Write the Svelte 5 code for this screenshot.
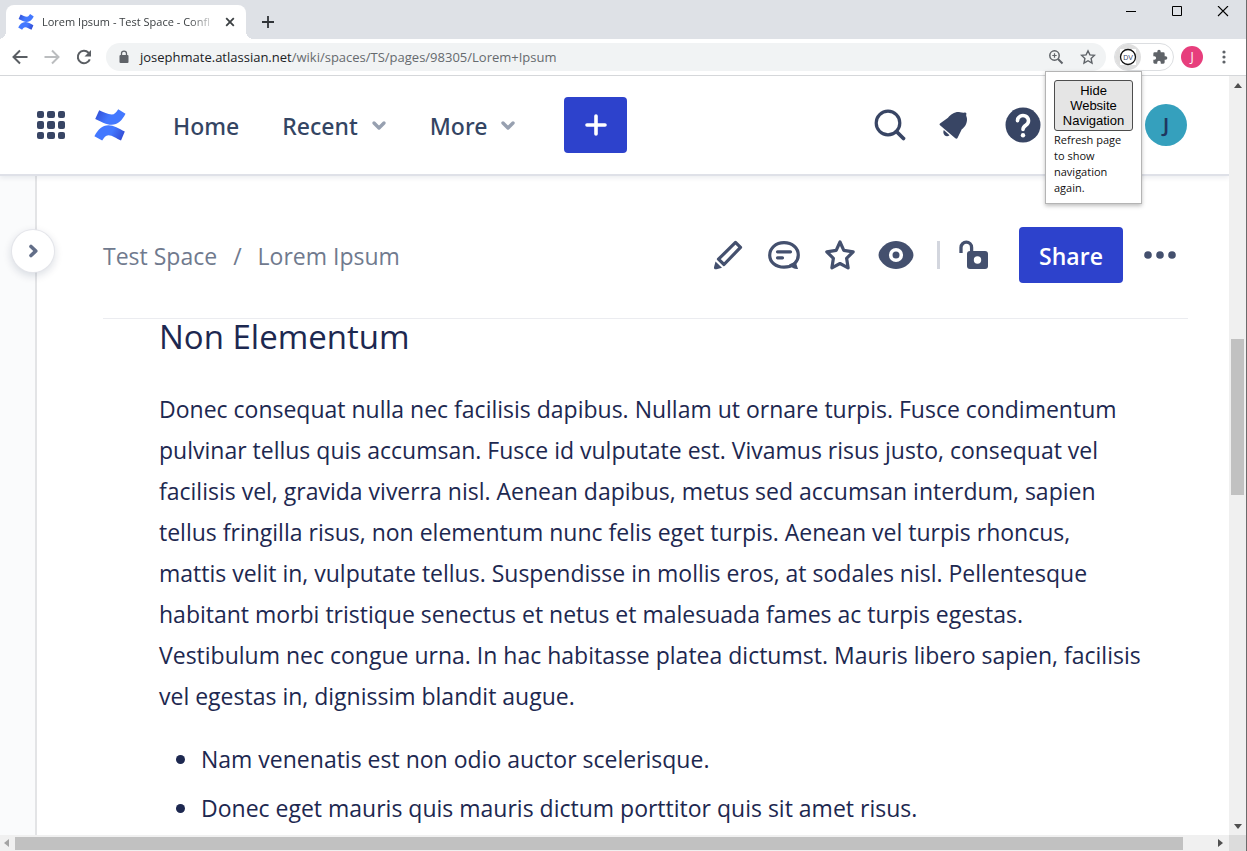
<script>
  const paragraph = [
    'Donec consequat nulla nec facilisis dapibus. Nullam ut ornare turpis. Fusce condimentum',
    'pulvinar tellus quis accumsan. Fusce id vulputate est. Vivamus risus justo, consequat vel',
    'facilisis vel, gravida viverra nisl. Aenean dapibus, metus sed accumsan interdum, sapien',
    'tellus fringilla risus, non elementum nunc felis eget turpis. Aenean vel turpis rhoncus,',
    'mattis velit in, vulputate tellus. Suspendisse in mollis eros, at sodales nisl. Pellentesque',
    'habitant morbi tristique senectus et netus et malesuada fames ac turpis egestas.',
    'Vestibulum nec congue urna. In hac habitasse platea dictumst. Mauris libero sapien, facilisis',
    'vel egestas in, dignissim blandit augue.'
  ];
  const bullets = [
    'Nam venenatis est non odio auctor scelerisque.',
    'Donec eget mauris quis mauris dictum porttitor quis sit amet risus.'
  ];
  const gridDots = [0, 1, 2, 3, 4, 5, 6, 7, 8];
</script>

{#snippet logo(size, id)}
  <svg width={size} height={size} viewBox="0 0 32 32" aria-hidden="true">
    <defs>
      <linearGradient id="{id}a" x1="0" y1="0" x2="1" y2="0.3">
        <stop offset="0" stop-color="#2f48cf" /><stop offset="0.55" stop-color="#4378ff" />
      </linearGradient>
      <linearGradient id="{id}b" x1="1" y1="1" x2="0" y2="0.7">
        <stop offset="0" stop-color="#2f40c8" /><stop offset="0.55" stop-color="#4378ff" />
      </linearGradient>
    </defs>
    <path fill="url(#{id}a)" d="M5.200 1.200c4.500 1.700 8.500 4.300 12.500 4.300 3 0 4.300-2.200 6.500-5.300L31.500 4.800C28 11.500 24 15.800 17.500 15.800 12.500 15.800 7 12.800 1.200 10z" />
    <path fill="url(#{id}b)" d="M27 31.500c-4.500-1.700-8.500-5.200-12.500-5.200-3 0-4.300 2.200-6.300 5.300L.4 27.200C4 20.500 8 16.200 14.500 16.200c5 0 10.500 3.500 16.300 6.200z" />
  </svg>
{/snippet}

{#snippet chevron()}
  <svg class="chevron" width="16" height="12" viewBox="0 0 16 12" aria-hidden="true"><path d="M3 3l5 5 5-5" fill="none" stroke="#97a0b0" stroke-width="3.400" stroke-linecap="round" stroke-linejoin="round" /></svg>
{/snippet}

<div class="window">
  <header class="tabs">
    <div class="tab">
      {@render logo(16, 'tab')}
      <span class="tab-title">Lorem Ipsum - Test Space - Confl</span>
      <button aria-label="Close tab"><svg width="10" height="10" viewBox="0 0 10 10"><path d="M1.200 1.200l7.600 7.600M8.800 1.200L1.200 8.800" stroke="#3c4043" stroke-width="1.800" /></svg></button>
    </div>
    <button class="new-tab" aria-label="New tab"><svg width="12" height="12" viewBox="0 0 12 12"><path d="M6 0v12M0 6h12" stroke="#303438" stroke-width="1.800" /></svg></button>
    <div class="controls">
      <button aria-label="Minimize"><svg width="12" height="12" viewBox="0 0 12 12"><path d="M1 5.500h10" stroke="#000" /></svg></button>
      <button aria-label="Maximize"><svg width="12" height="12" viewBox="0 0 12 12"><path d="M1.500 .5h9v9h-9z" fill="none" stroke="#000" /></svg></button>
      <button aria-label="Close"><svg width="12" height="12" viewBox="0 0 12 12"><path d="M1 0l10 10M11 0L1 10" stroke="#000" stroke-width="1.100" /></svg></button>
    </div>
  </header>

  <div class="toolbar">
    <button class="tool" aria-label="Back"><svg width="24" height="24" viewBox="0 0 24 24"><path d="M19.500 12H6M12 5.500L5.500 12l6.500 6.500" fill="none" stroke="#5a5e63" stroke-width="2" /></svg></button>
    <button class="tool" aria-label="Forward"><svg width="24" height="24" viewBox="0 0 24 24"><path d="M4.500 12H18M12 5.500l6.500 6.500-6.500 6.500" fill="none" stroke="#bbbdbf" stroke-width="2" /></svg></button>
    <button class="tool" aria-label="Reload"><svg width="24" height="24" viewBox="0 0 24 24"><path d="M17.800 14.300a6.200 6.200 0 1 1-1.300-6.600l1.800 1.800" fill="none" stroke="#5a5e63" stroke-width="2" /><path d="M19 5v6.500h-6.500z" fill="#5a5e63" /></svg></button>
    <div class="omnibox">
      <svg width="12" height="14" viewBox="0 0 12 14" aria-hidden="true"><rect x="1.500" y="5" width="9" height="8" rx="1" fill="#5f6368" /><path d="M3.500 6V3.600a2.500 2.500 0 0 1 5 0V6" fill="none" stroke="#5f6368" stroke-width="1.300" /></svg>
      <span class="url"><b>josephmate.atlassian.net</b>/wiki/spaces/TS/pages/98305/Lorem+Ipsum</span>
      <button class="tool" aria-label="Zoom"><svg width="16" height="16" viewBox="0 0 16 16"><circle cx="6.500" cy="6.500" r="4.700" fill="none" stroke="#5f6368" stroke-width="1.500" /><path d="M10 10l4.500 4.500" stroke="#5f6368" stroke-width="1.900" /><path d="M6.500 4.300v4.400M4.300 6.500h4.400" stroke="#5f6368" stroke-width="1.200" /></svg></button>
      <button class="tool" aria-label="Bookmark"><svg width="16" height="16" viewBox="0 0 16 16"><path d="M8 1.800l1.900 4.100 4.500.5-3.300 3.100.9 4.500L8 11.700 4 14l.9-4.500L1.600 6.400l4.500-.5z" fill="none" stroke="#5f6368" stroke-width="1.400" /></svg></button>
    </div>
    <div class="extensions">
      <button class="dv" aria-label="Toggle navigation extension"><svg width="18" height="18" viewBox="0 0 18 18"><rect x="1" y="1" width="16" height="16" fill="#fff" /><circle cx="9" cy="9" r="7.500" fill="#fff" stroke="#111" stroke-width="1.300" /><text x="9" y="11.500" text-anchor="middle" font-size="7" font-family="Liberation Sans, sans-serif" fill="#35456b">DV</text></svg></button>
      <button class="tool" aria-label="Extensions"><svg width="16" height="16" viewBox="0 0 24 24"><path fill="#5f6368" d="M20.500 11H19V7a2 2 0 0 0-2-2h-4V3.500a2.500 2.500 0 0 0-5 0V5H4a2 2 0 0 0-2 2v3.800h1.500a2.700 2.700 0 0 1 0 5.400H2V20c0 1.100.9 2 2 2h3.800v-1.500a2.700 2.700 0 0 1 5.400 0V22H17a2 2 0 0 0 2-2v-4h1.500a2.500 2.500 0 0 0 0-5z" /></svg></button>
      <div class="popup">
        <button>Hide Website Navigation</button>
        <p>Refresh page to show navigation again.</p>
      </div>
    </div>
    <button class="profile">J</button>
    <button class="tool more" aria-label="Menu"><svg width="4" height="14" viewBox="0 0 4 14" fill="#5f6368"><circle cx="2" cy="2" r="1.600" /><circle cx="2" cy="7" r="1.600" /><circle cx="2" cy="12" r="1.600" /></svg></button>
  </div>

  <div class="view">
    <div class="page">
      <nav class="site-nav">
        <button class="apps" aria-label="Switch to">
          {#each gridDots as d (d)}<i></i>{/each}
        </button>
        <a href="#home" class="brand" aria-label="Confluence">{@render logo(32, 'nav')}</a>
        <div class="links">
          <a href="#home">Home</a>
          <button>Recent {@render chevron()}</button>
          <button>More {@render chevron()}</button>
        </div>
        <button class="create" aria-label="Create"><svg width="22" height="22" viewBox="0 0 22 22"><path d="M11 2v18M2 11h18" stroke="#fff" stroke-width="3.600" stroke-linecap="round" /></svg></button>
        <div class="nav-icons">
          <button aria-label="Search"><svg width="34" height="34" viewBox="0 0 34 34"><circle cx="15" cy="15" r="11.800" fill="none" stroke="#384564" stroke-width="3.200" /><path d="M23.500 23.500l7 7" stroke="#384564" stroke-width="3.800" stroke-linecap="round" /></svg></button>
          <button aria-label="Notifications"><svg width="34" height="34" viewBox="2 0 34 34" fill="#384564"><path d="M3 15.500l8-5.800C14 6.500 18 3.400 23 4.200c1.800.3 3.200.9 4.600.3 1.200-.5 2.300.8 1.700 1.800-.5 1.200.5 2.600.7 4.400.2 4.500-2 8.300-5.200 10.600L20.500 30c-.4 1-1.400 1-2.200.3L3 17.200c-.6-.5-.6-1.200 0-1.700z" /><path d="M6.800 22l5.700 5.300c-1.600 1.300-3.600 1.200-4.900-.1-1.300-1.300-1.700-3.400-.8-5.200z" /></svg></button>
          <button aria-label="Help"><svg width="36" height="36" viewBox="0 0 36 36"><circle cx="18" cy="18" r="17.500" fill="#384564" /><path d="M12.500 13.800a5.500 5.200 0 1 1 8.500 4.300c-1.900 1.200-3 1.900-3 4.400" fill="none" stroke="#fff" stroke-width="3.600" stroke-linecap="round" /><circle cx="18" cy="28.300" r="2.200" fill="#fff" /></svg></button>
        </div>
        <button class="avatar">J</button>
      </nav>

      <div class="body">
        <aside>
          <button aria-label="Expand sidebar"><svg width="14" height="18" viewBox="0 0 14 18"><path d="M5 4.500L9.800 9 5 13.500" fill="none" stroke="#626e88" stroke-width="3.600" stroke-linecap="round" stroke-linejoin="round" /></svg></button>
        </aside>
        <main>
          <div class="page-head">
            <div class="crumbs"><a href="#space">Test Space</a><span>/</span><a href="#page">Lorem Ipsum</a></div>
            <div class="actions">
              <button aria-label="Edit"><svg width="36" height="36" viewBox="0 0 36 36"><path d="M25.500 5.400l5 5L14 27.500l-5.500-5.300z" fill="none" stroke="#44506e" stroke-width="3.200" stroke-linejoin="round" /><path d="M5.500 24.500l6.500 6.200-5.500 1.600c-1.600.3-2.800-.4-2.500-2z" fill="#44506e" /></svg></button>
              <button aria-label="Comments"><svg width="36" height="36" viewBox="0 0 36 36"><path d="M28 27.500c-2.500 1.700-6 2.700-10 2.700-8.300 0-14.300-5.200-14.300-12S9.700 5.700 18 5.700s14.300 5.300 14.300 12.400c0 3.200-1.200 5.800-3.300 8z" fill="none" stroke="#44506e" stroke-width="3.200" /><path d="M23 27.500l6.500-3 2.500 7.500c-3.500.3-6-1-9-4.500z" fill="#44506e" /><path d="M11.500 14.800h13M11.500 20.800h5" stroke="#44506e" stroke-width="3.200" stroke-linecap="round" /></svg></button>
              <button aria-label="Star"><svg width="36" height="36" viewBox="0 0 36 36"><path d="M18 5l3.800 8.300 9.400 1.500-6.600 6.500 1.500 9.500L18 26.500l-8.100 4.300 1.500-9.500-6.600-6.500 9.400-1.500z" fill="none" stroke="#44506e" stroke-width="3.200" stroke-linejoin="round" /></svg></button>
              <button aria-label="Watch"><svg width="36" height="36" viewBox="0 0 36 36"><path d="M18 4c7 0 12.500 3.800 16.200 9.500 1.700 2.800 1.700 6.200 0 9C30.500 28.200 25 32 18 32S5.500 28.200 1.800 22.500c-1.700-2.800-1.700-6.200 0-9C5.500 7.800 11 4 18 4z" fill="#44506e" /><circle cx="18" cy="18" r="5.300" fill="#44506e" stroke="#fff" stroke-width="3.600" /></svg></button>
              <i class="divider"></i>
              <button aria-label="Restrictions"><svg width="36" height="36" viewBox="0 0 36 36"><path d="M5 16v-5.500a5.300 5.300 0 0 1 10.600 0V16" fill="none" stroke="#44506e" stroke-width="3.300" /><rect x="11" y="14" width="21" height="18" rx="3" fill="#44506e" /><circle cx="21.500" cy="23" r="3.700" fill="#fff" /></svg></button>
            </div>
            <button class="share">Share</button>
            <button class="dots" aria-label="More actions"><svg width="34" height="10" viewBox="0 0 34 10" fill="#44506e"><circle cx="5" cy="5" r="3.800" /><circle cx="17" cy="5" r="3.800" /><circle cx="29" cy="5" r="3.800" /></svg></button>
          </div>
          <article>
            <h1>Non Elementum</h1>
            <p>{#each paragraph as line}{line}<br />{/each}</p>
            <ul>
              {#each bullets as item}<li>{item}</li>{/each}
            </ul>
          </article>
        </main>
      </div>
    </div>
    <div class="vbar">
      <svg width="8" height="5" viewBox="0 0 8 5"><path d="M0 5l4-5 4 5z" fill="#505050" /></svg>
      <div class="vtrack"><div class="vthumb"></div></div>
      <svg width="8" height="5" viewBox="0 0 8 5"><path d="M0 0l4 5 4-5z" fill="#505050" /></svg>
    </div>
    <div class="hbar">
      <svg width="5" height="8" viewBox="0 0 5 8"><path d="M5 0L0 4l5 4z" fill="#a3a3a3" /></svg>
      <div class="htrack"><div class="hthumb"></div></div>
      <svg width="5" height="8" viewBox="0 0 5 8"><path d="M0 0l5 4-5 4z" fill="#505050" /></svg>
    </div>
    <div class="corner"></div>
  </div>
</div>

<style>
  :global(body) { margin: 0; }
  * { box-sizing: border-box; }
  button { border: 0; padding: 0; margin: 0; background: none; font: inherit; color: inherit; cursor: pointer; }
  a { color: inherit; text-decoration: none; }
  svg { display: block; flex: none; }

  .window {
    height: 100vh;
    display: flex;
    flex-direction: column;
    overflow: hidden;
    background: #fff;
    border-right: 1px solid #6b6b6b;
    font-family: "Open Sans", "Noto Sans", sans-serif;
  }

  .tabs { display: flex; align-items: flex-end; height: 39px; flex: none; background: #dee1e6; padding-left: 6px; }
  .tab { position: relative; display: flex; align-items: center; gap: 8px; width: 240px; height: 34px; padding: 0 11px 0 12px; background: #fff; border-radius: 8px 8px 0 0; }
  .tab::before, .tab::after { content: ""; position: absolute; bottom: 0; width: 8px; height: 8px; }
  .tab::before { left: -8px; background: radial-gradient(circle at 0 0, transparent 8px, #fff 8px); }
  .tab::after { right: -8px; background: radial-gradient(circle at 100% 0, transparent 8px, #fff 8px); }
  .tab-title { flex: 1; min-width: 0; white-space: nowrap; font-size: 11px; line-height: 16px; color: #3c4043; mask-image: linear-gradient(to right, #000 84%, transparent); }
  .new-tab { align-self: center; margin: 4px 0 0 16px; }
  .controls { display: flex; align-self: flex-start; margin-left: auto; }
  .controls button { display: grid; place-items: center; width: 46px; height: 23px; }

  .toolbar { display: flex; align-items: center; height: 37px; flex: none; padding: 0 6px 0 4px; background: #fff; border-bottom: 1px solid #d5d7da; }
  .tool { display: grid; place-items: center; width: 32px; height: 28px; }
  .omnibox { display: flex; align-items: center; flex: 1; height: 28px; margin: 0 8px 0 6px; padding: 0 2px 0 12px; border-radius: 14px; background: #f1f3f4; }
  .url { flex: 1; margin-left: 10px; font-size: 13px; line-height: 20px; color: #666a6e; white-space: nowrap; }
  .url b { font-weight: 400; color: #202124; }
  .extensions { position: relative; display: flex; align-items: center; justify-content: space-between; width: 60px; height: 28px; padding-right: 5px; border: 1px solid #dcdee1; border-radius: 14px; }
  .extensions .dv { display: grid; place-items: center; width: 26px; height: 26px; flex: none; background: #dfdfdf; border-radius: 50%; }
  .extensions .tool { width: 16px; }
  .profile { width: 22px; height: 22px; margin-left: 7px; border-radius: 50%; background: #e73e7c; color: #fff; font-size: 12px; line-height: 22px; }
  .more { margin-left: 5px; }

  .popup { position: absolute; z-index: 5; top: 27px; right: 31px; width: 97px; padding: 8px 8px 7px; background: #fff; border: 1px solid #b4b4b4; box-shadow: 0 2px 4px rgba(0, 0, 0, 0.25); }
  .popup button { display: block; width: 79px; height: 51px; padding: 0 6px; background: #e5e5e5; border: 1px solid #4d4d4d; border-radius: 3px; font-family: "Liberation Sans", Arial, sans-serif; font-size: 13px; line-height: 15px; color: #000; }
  .popup p { margin: 1px 0 0; font-size: 11px; line-height: 16px; color: #111; }

  .view { flex: 1; min-height: 0; display: grid; grid-template: minmax(0, 1fr) 16px / minmax(0, 1fr) 17px; }
  .page { display: flex; flex-direction: column; overflow: hidden; color: #172b4d; }
  .vbar, .hbar { display: flex; align-items: center; background: #f0f0f0; }
  .vbar { flex-direction: column; padding: 7px 0 6px; }
  .hbar { padding: 0 6px 0 4px; }
  .vtrack { flex: 1; width: 13px; margin: 5px 0; display: flex; flex-direction: column; }
  .vtrack::before { content: ""; flex: 246; }
  .vthumb { flex: 156; background: #c1c1c1; }
  .vtrack::after { content: ""; flex: 324; }
  .htrack { flex: 1; height: 13px; margin: 0 5px 0 6px; }
  .hthumb { width: 97.500%; height: 100%; background: #c1c1c1; }
  .corner { background: #dcdcdc; }

  .site-nav { position: relative; z-index: 2; display: flex; align-items: center; flex: none; height: 100px; padding: 0 42px 0 37px; background: #fff; border-bottom: 2px solid #dfe1e8; box-shadow: 0 2px 5px rgba(9, 30, 66, 0.08); color: #344563; font-family: "Noto Sans", "Open Sans", sans-serif; font-size: 23px; font-weight: 500; line-height: 34px; }
  .apps { display: grid; grid-template-columns: repeat(3, 1fr); gap: 3px; width: 28px; height: 28px; }
  .apps i { background: #384564; border-radius: 2px; }
  .brand { margin-left: 29px; }
  .links { display: flex; align-items: center; gap: 43px; margin-left: 47px; padding-top: 2px; }
  .links button { display: flex; align-items: center; gap: 13px; }
  .create { display: grid; place-items: center; width: 63px; height: 56px; margin-left: 48px; background: #2d42cc; border-radius: 4px; }
  .nav-icons { display: flex; align-items: center; gap: 32px; margin: 0 104px 0 auto; }
  .avatar { width: 42px; height: 42px; border-radius: 50%; background: #35a0bd; color: #1f3760; font-size: 20px; font-weight: 600; line-height: 42px; }

  .body { flex: 1; min-height: 0; display: flex; }
  aside { position: relative; flex: none; width: 37px; background: #fafbfc; border-right: 2px solid #e3e4e6; }
  aside button { position: absolute; z-index: 1; top: 54px; left: 12px; display: grid; place-items: center; width: 42px; height: 42px; border-radius: 50%; background: #fff; box-shadow: 0 0 0 1px #e4e5ea, 0 3px 8px 1px rgba(9, 30, 66, 0.14); }
  main { flex: 1; min-width: 0; }
  .page-head { display: flex; align-items: center; height: 143px; margin: 0 41px 0 66px; padding-top: 16px; border-bottom: 1px solid #ebecf0; }
  .crumbs { display: flex; gap: 16px; padding-top: 2px; font-size: 23px; line-height: 34px; color: #707a8e; white-space: nowrap; }
  .actions { display: flex; align-items: center; gap: 20px; margin-left: auto; }
  .divider { width: 3px; height: 28px; margin: 0 -4px 0 3px; background: #d3d6de; }
  .share { width: 104px; height: 56px; margin-left: 27px; padding-top: 2px; border-radius: 4px; background: #2d42cc; color: #fff; font-size: 23px; font-weight: 600; }
  .dots { margin: 0 11px 0 20px; }

  article { padding: 0 41px 0 122px; color: #1d2850; }
  h1 { margin: 0; font-size: 33px; font-weight: 400; line-height: 36px; }
  article p { margin: 34px 0 22px; font-size: 23px; line-height: 41px; white-space: nowrap; }
  ul { margin: 0; padding: 0; list-style: none; font-size: 23px; line-height: 41px; }
  li { display: flex; align-items: center; gap: 16px; margin: 0 0 8px 17px; white-space: nowrap; }
  li::before { content: ""; width: 9px; height: 9px; border-radius: 50%; background: currentColor; }
</style>
